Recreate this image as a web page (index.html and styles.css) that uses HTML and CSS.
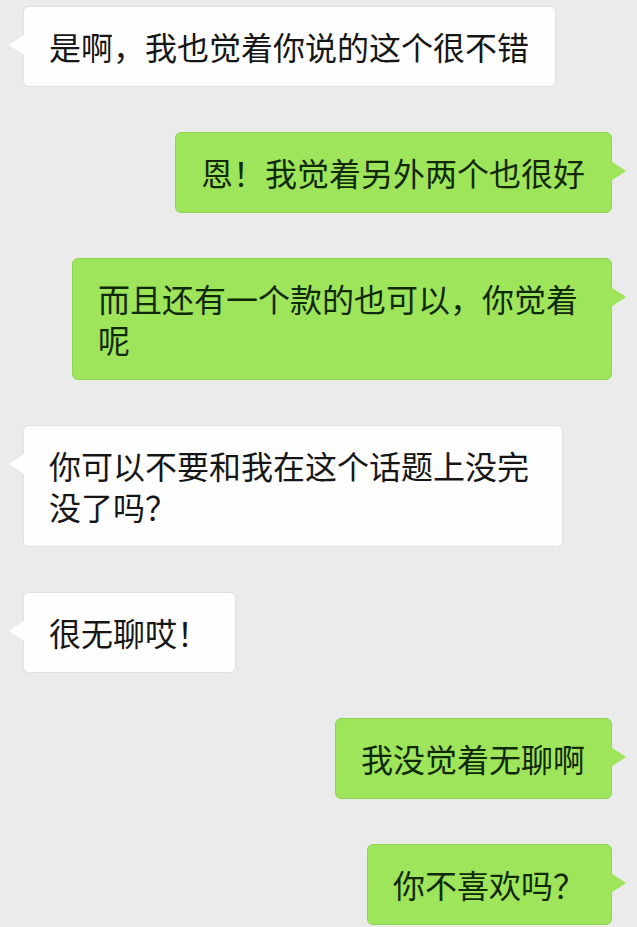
FILE: index.html
```html
<html>
	<head>
		<meta charset="utf-8">
		<title> 聊天 </title>
		<link rel="stylesheet" href="styles.css">
	</head>
	<body>
		<div class="message-area">
			<div class="message-box others-message-box">
				<div class="message others-message">是啊，我也觉着你说的这个很不错</div>
			</div>
			<div class="message-box my-message-box">
				<div class="message my-message">恩！我觉着另外两个也很好</div>
			</div>
			<div class="message-box my-message-box">
				<div class="message my-message">而且还有一个款的也可以，你觉着呢</div>
			</div>
			<div class="message-box others-message-box">
				<div class="message others-message">你可以不要和我在这个话题上没完没了吗？</div>
			</div>
			<div class="message-box others-message-box">
				<div class="message others-message">很无聊哎！</div>
			</div>
			<div class="message-box my-message-box">
				<div class="message my-message">我没觉着无聊啊</div>
			</div>
			<div class="message-box my-message-box">
				<div class="message my-message">你不喜欢吗？</div>
			</div>
		</div>
	</body>
</html>
```

FILE: styles.css
```css
* {
	margin: 0;
	padding: 0;
	box-sizing: border-box;
}

body {
	background: #ebebeb;
	font-family: "Noto Sans CJK SC", "Noto Sans", sans-serif;
	overflow: hidden;
}

.message-area {
	display: flex;
	flex-direction: column;
	gap: 45px;
	padding: 6px 25px 0 23px;
}

.message-box {
	display: flex;
}

.others-message-box {
	justify-content: flex-start;
}

.my-message-box {
	justify-content: flex-end;
}

.message {
	position: relative;
	max-width: 540px;
	padding: 19px 26px 19px 25px;
	font-size: 32px;
	line-height: 41px;
	color: #161616;
	border-radius: 6px;
}

/* little arrow pointing at the sender */
.message::before {
	content: "";
	position: absolute;
	top: 28px;
	width: 0;
	height: 0;
	border-top: 10px solid transparent;
	border-bottom: 10px solid transparent;
}

.others-message {
	background: #fefefe;
	border: 1px solid #e0e0e0;
}

.others-message::before {
	left: -15px;
	border-right: 15px solid #fefefe;
}

.my-message {
	background: #9fe55c;
	border: 1px solid #8fd454;
	color: #112a06;
}

.my-message::before {
	right: -15px;
	border-left: 15px solid #9fe55c;
}
```
